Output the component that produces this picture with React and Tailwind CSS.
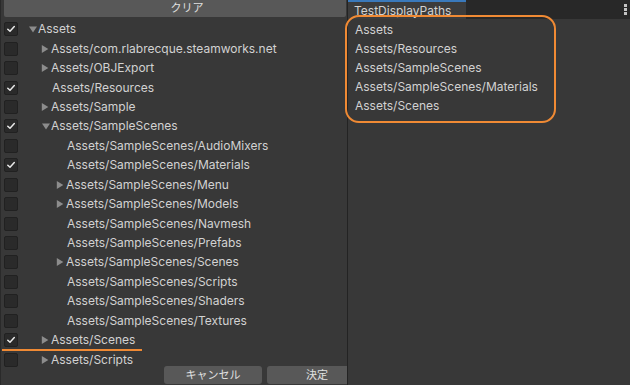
import React from "react";

const rows = [
  { t: "Assets", lvl: 0, arrow: "down", checked: true },
  { t: "Assets/com.rlabrecque.steamworks.net", lvl: 1, arrow: "right" },
  { t: "Assets/OBJExport", lvl: 1, arrow: "right" },
  { t: "Assets/Resources", lvl: 1, checked: true },
  { t: "Assets/Sample", lvl: 1, arrow: "right" },
  { t: "Assets/SampleScenes", lvl: 1, arrow: "down", checked: true },
  { t: "Assets/SampleScenes/AudioMixers", lvl: 2 },
  { t: "Assets/SampleScenes/Materials", lvl: 2, checked: true },
  { t: "Assets/SampleScenes/Menu", lvl: 2, arrow: "right" },
  { t: "Assets/SampleScenes/Models", lvl: 2, arrow: "right" },
  { t: "Assets/SampleScenes/Navmesh", lvl: 2 },
  { t: "Assets/SampleScenes/Prefabs", lvl: 2 },
  { t: "Assets/SampleScenes/Scenes", lvl: 2, arrow: "right" },
  { t: "Assets/SampleScenes/Scripts", lvl: 2 },
  { t: "Assets/SampleScenes/Shaders", lvl: 2 },
  { t: "Assets/SampleScenes/Textures", lvl: 2 },
  { t: "Assets/Scenes", lvl: 1, arrow: "right", checked: true },
  { t: "Assets/Scripts", lvl: 1, arrow: "right" },
];

const indent = [8, 21, 36];

function Checkbox({ checked }) {
  return (
    <div className="w-[14px] h-[14px] rounded-[2px] bg-[#2a2a2a] border border-[#212121] flex items-center justify-center shrink-0">
      {checked && (
        <svg width="10" height="10" viewBox="0 0 10 10">
          <path d="M1.8 5.2 L4 7.3 L8.3 2.6" fill="none" stroke="#e8e8e8" strokeWidth="1.5" strokeLinecap="round" strokeLinejoin="round" />
        </svg>
      )}
    </div>
  );
}

function Arrow({ dir }) {
  if (dir === "down")
    return (
      <svg width="10" height="10" viewBox="0 0 10 10" className="shrink-0">
        <path d="M1 2.5 L9 2.5 L5 8.5 Z" fill="#8c8c8c" />
      </svg>
    );
  return (
    <svg width="10" height="10" viewBox="0 0 10 10" className="shrink-0">
      <path d="M0.8 1 L7.3 5 L0.8 9 Z" fill="#8c8c8c" />
    </svg>
  );
}

export default function App() {
  return (
    <div
      className="relative w-[630px] h-[385px] overflow-hidden flex bg-[#383838] text-[#d2d2d2] text-[12px]"
      style={{ fontFamily: "Inter, 'Noto Sans CJK JP', sans-serif" }}
    >
      {/* Left panel */}
      <div className="w-[347px] h-full flex flex-col bg-[#383838] border-l border-[#2a2a2a]">
        <div className="h-[17px] ml-[3px] mr-[1px] bg-[#585858] rounded-b-[2px] flex items-center justify-center pl-[24px] text-[11px] text-[#e0e0e0] leading-none shrink-0">
          クリア
        </div>
        <div className="flex-1 min-h-0 pt-[2.5px] pl-[3px]">
          {rows.map((r, i) => (
            <div key={i} className="h-[19.45px] flex items-center">
              <Checkbox checked={r.checked} />
              <div className="flex items-center" style={{ marginLeft: indent[r.lvl] + 2 }}>
                <div className="w-[10px] flex items-center">{r.arrow && <Arrow dir={r.arrow} />}</div>
                <span className={`whitespace-nowrap ${r.arrow ? "" : "ml-[1px]"}`}>{r.t}</span>
              </div>
            </div>
          ))}
        </div>
        <div className="h-[20px] flex items-end gap-[5px] pl-[163px] pb-[1px] shrink-0">
          <div className="w-[98px] h-[18px] bg-[#585858] rounded-[3px] flex items-center justify-center text-[11px] text-[#e0e0e0]">
            キャンセル
          </div>
          <div className="flex-1 h-[18px] bg-[#585858] rounded-l-[3px] flex items-center justify-center pl-[20px] text-[11px] text-[#e0e0e0]">
            決定
          </div>
        </div>
      </div>

      {/* Right panel */}
      <div className="flex-1 h-full flex flex-col border-l border-[#232323]">
        <div className="h-[19px] bg-[#282828] flex items-stretch justify-between shrink-0">
          <div className="w-[118px] bg-[#3c3c3c] border-t-2 border-[#3a79bb] flex items-center pl-[6px] text-[12px] text-[#d2d2d2]">
            TestDisplayPaths
          </div>
          <div className="flex flex-col gap-[1px] justify-center pr-[3px]">
            <div className="w-[3px] h-[3px] bg-[#c4c4c4]" />
            <div className="w-[3px] h-[3px] bg-[#c4c4c4]" />
            <div className="w-[3px] h-[3px] bg-[#c4c4c4]" />
          </div>
        </div>
        <div className="flex-1 bg-[#383838] pt-[2px] pl-[7px]">
          {["Assets", "Assets/Resources", "Assets/SampleScenes", "Assets/SampleScenes/Materials", "Assets/Scenes"].map((t) => (
            <div key={t} className="h-[18.8px] flex items-center whitespace-nowrap">
              {t}
            </div>
          ))}
        </div>
      </div>

      {/* Annotations */}
      <div className="absolute left-[345px] top-[15px] w-[211px] h-[108px] rounded-[14px] border-[2.5px] border-[#f08a34] pointer-events-none" />
      <div className="absolute left-[2px] top-[349px] w-[140px] h-[2px] bg-[#f08a34]" />
    </div>
  );
}
